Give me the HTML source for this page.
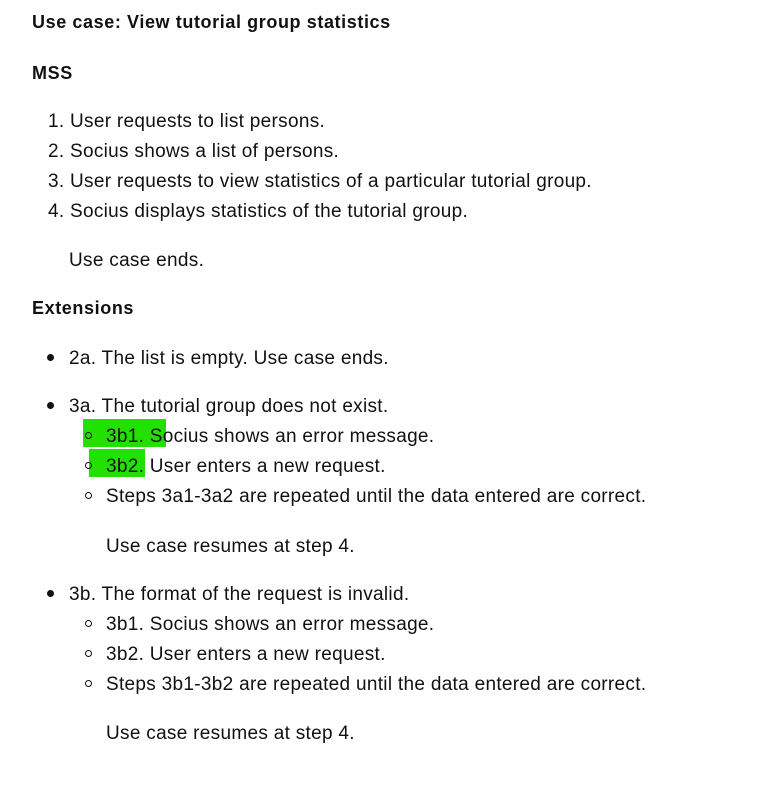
<!DOCTYPE html>
<html><head><meta charset="utf-8"><style>
body{margin:0;width:760px;height:787px;background:#fff;font-family:"Liberation Sans",sans-serif;color:#111;position:relative;overflow:hidden}
.l{position:absolute;font-size:19px;letter-spacing:0.3px;line-height:30px;height:30px;white-space:nowrap;margin-top:2px}
.b{font-weight:bold;font-size:18px;letter-spacing:0.6px;margin-top:0}
.hl{position:absolute;background:#22e000}
.d{position:absolute;width:7px;height:7px;border-radius:50%;background:#111}
.c{position:absolute;width:5px;height:5px;border-radius:50%;border:1.3px solid #111}
</style></head><body>
<div class="hl" style="left:83px;top:419px;width:83px;height:28px"></div>
<div class="hl" style="left:89px;top:449px;width:56px;height:28px"></div>
<div class="l b" style="left:32px;top:7px">Use case: View tutorial group statistics</div>
<div class="l b" style="left:32px;top:58px">MSS</div>
<div class="l" style="left:48px;top:105px">1. User requests to list persons.</div>
<div class="l" style="left:48px;top:135px">2. Socius shows a list of persons.</div>
<div class="l" style="left:48px;top:165px">3. User requests to view statistics of a particular tutorial group.</div>
<div class="l" style="left:48px;top:195px">4. Socius displays statistics of the tutorial group.</div>
<div class="l" style="left:69px;top:244px">Use case ends.</div>
<div class="l b" style="left:32px;top:293px">Extensions</div>
<div class="d" style="left:47px;top:354px"></div>
<div class="l" style="left:69px;top:342px">2a. The list is empty. Use case ends.</div>
<div class="d" style="left:47px;top:402px"></div>
<div class="l" style="left:69px;top:390px">3a. The tutorial group does not exist.</div>
<div class="c" style="left:85px;top:432px"></div>
<div class="l" style="left:106px;top:420px">3b1. Socius shows an error message.</div>
<div class="c" style="left:85px;top:462px"></div>
<div class="l" style="left:106px;top:450px">3b2. User enters a new request.</div>
<div class="c" style="left:85px;top:492px"></div>
<div class="l" style="left:106px;top:480px">Steps 3a1-3a2 are repeated until the data entered are correct.</div>
<div class="l" style="left:106px;top:530px">Use case resumes at step 4.</div>
<div class="d" style="left:47px;top:590px"></div>
<div class="l" style="left:69px;top:578px">3b. The format of the request is invalid.</div>
<div class="c" style="left:85px;top:620px"></div>
<div class="l" style="left:106px;top:608px">3b1. Socius shows an error message.</div>
<div class="c" style="left:85px;top:650px"></div>
<div class="l" style="left:106px;top:638px">3b2. User enters a new request.</div>
<div class="c" style="left:85px;top:680px"></div>
<div class="l" style="left:106px;top:668px">Steps 3b1-3b2 are repeated until the data entered are correct.</div>
<div class="l" style="left:106px;top:717px">Use case resumes at step 4.</div>
</body></html>
